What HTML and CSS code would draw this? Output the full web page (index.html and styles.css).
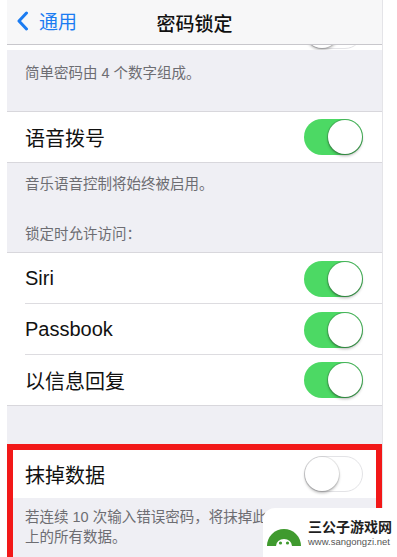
FILE: index.html
```html
<!DOCTYPE html>
<html lang="zh">
<head>
<meta charset="utf-8">
<link rel="stylesheet" href="styles.css">
</head>
<body>
<div class="screen">
  <div class="nav">
    <div class="back">
      <svg class="chev" width="13" height="20" viewBox="0 0 13 20"><path d="M10.5 2 L3 10 L10.5 18" fill="none" stroke="#1b7cf2" stroke-width="3" stroke-linecap="round" stroke-linejoin="round"/></svg>
      <span>通用</span>
    </div>
    <div class="title">密码锁定</div>
  </div>
  <div class="stub"><span class="switch off stub-switch"><span class="knob"></span></span></div>
  <div class="note note1">简单密码由 4 个数字组成。</div>
  <div class="group g1">
    <div class="row"><span class="label">语音拨号</span><span class="switch on"><span class="knob"></span></span></div>
  </div>
  <div class="note note2">音乐语音控制将始终被启用。</div>
  <div class="header">锁定时允许访问：</div>
  <div class="group">
    <div class="row sep"><span class="label">Siri</span><span class="switch on"><span class="knob"></span></span></div>
    <div class="row sep"><span class="label">Passbook</span><span class="switch on"><span class="knob"></span></span></div>
    <div class="row last"><span class="label">以信息回复</span><span class="switch on"><span class="knob"></span></span></div>
  </div>
  <div class="marked">
    <div class="group flat">
      <div class="row row-erase"><span class="label">抹掉数据</span><span class="switch off"><span class="knob"></span></span></div>
    </div>
    <div class="note note3"><span class="line">若连续 10 次输入错误密码，将抹掉此 iPhone</span><span class="line">上的所有数据。</span></div>
  </div>
</div>
<div class="watermark">
  <svg class="logo" width="36" height="26" viewBox="0 0 36 26">
    <path d="M1 24 A17 17 0 0 1 35 24 Z" fill="#3f9a2e"/>
    <path d="M10 24 A8 7 0 0 1 26 24 Z" fill="#fff"/>
    <circle cx="14.5" cy="21" r="1.6" fill="#3f9a2e"/>
    <circle cx="21.5" cy="21" r="1.6" fill="#3f9a2e"/>
  </svg>
  <div class="wm-text">
    <div class="wm-name">三公子游戏网</div>
    <div class="wm-url">www.sangongzi.net</div>
  </div>
</div>
</body>
</html>
```
FILE: styles.css
```css
* { box-sizing: border-box; }
html, body { margin: 0; padding: 0; }
body {
  background: #fff;
  width: 397px;
  height: 557px;
  overflow: hidden;
  font-family: "Liberation Sans", "Noto Sans CJK SC", sans-serif;
  color: #111;
}
.screen {
  margin-left: 7px;
  width: 376px;
  height: 557px;
  background: #efeff4;
  overflow: hidden;
  border-right: 1px solid #e4e4e8;
}
.nav {
  height: 45px;
  background: #f7f7f8;
  border-bottom: 1px solid #c8c7cc;
  display: flex;
  align-items: center;
  position: relative;
}
.back {
  display: flex;
  align-items: center;
  gap: 10px;
  padding-left: 9px;
  color: #1b7cf2;
  font-size: 19px;
  margin-top: -3px;
}
.title {
  position: absolute;
  left: 0; right: 0; top: 9px;
  text-align: center;
  font-size: 19px;
  font-weight: 500;
  color: #111;
  pointer-events: none;
}
.stub {
  height: 5px;
  background: #fff;
  overflow: hidden;
  display: flex;
  justify-content: flex-end;
  padding-right: 19px;
}
.stub-switch { margin-top: -32px; border-color: #f0f0f2; }
.note {
  font-size: 14.5px;
  line-height: 20px;
  color: #6d6d72;
  padding: 0 18px;
}
.note1 { padding-top: 13px; height: 61px; }
.note2 { padding-top: 11px; height: 31px; }
.header {
  font-size: 14.5px;
  line-height: 20px;
  color: #6d6d72;
  padding: 30px 18px 8px;
}
.group {
  background: #fff;
  border-top: 1px solid #d8d7dc;
  border-bottom: 1px solid #d8d7dc;
}
.group.flat { border: none; }
.row {
  height: 51px;
  display: flex;
  align-items: center;
  justify-content: space-between;
  padding: 0 19px 0 18px;
  position: relative;
}
.row.last { height: 50px; }
.g1 .row { height: 50px; }
.row.sep::after {
  content: "";
  position: absolute;
  left: 18px; right: 0; bottom: 0;
  height: 1px;
  background: #dddce0;
}
.label { font-size: 20px; color: #111; }
.switch {
  width: 59px;
  height: 36px;
  border-radius: 18px;
  position: relative;
  flex: none;
  display: block;
}
.switch.on { background: #4cd964; }
.switch.off { background: #fff; border: 1.5px solid #e3e3e6; }
.knob {
  position: absolute;
  top: 1px;
  width: 34px;
  height: 34px;
  border-radius: 50%;
  background: #fff;
  box-shadow: 0 2px 3px rgba(0,0,0,0.28), 0 0 0 1px rgba(0,0,0,0.08);
}
.switch.on .knob { right: 1px; box-shadow: 0 2px 3px rgba(0,0,0,0.3), 0 0 0 1px rgba(60,110,70,0.35); }
.switch.off .knob { left: -0.5px; top: -0.5px; }
.marked {
  margin-top: 38px;
  border: 6px solid #f21818;
  border-bottom: none;
  height: 120px;
}
.row-erase { height: 48px; padding-left: 12px; padding-right: 13px; }
.note3 { padding: 9px 12px 0; background: #efeff4; }
.line { display: block; white-space: nowrap; }
.watermark {
  position: absolute;
  left: 263px;
  top: 508px;
  width: 134px;
  height: 49px;
  background: #fff;
  border-top-left-radius: 12px;
  display: flex;
  align-items: center;
  gap: 6px;
  padding-left: 3px;
}
.logo { flex: none; margin-top: 4px; }
.wm-text { white-space: nowrap; }
.wm-name {
  font-family: "Noto Sans CJK SC", sans-serif;
  font-weight: 700;
  font-size: 14px;
  line-height: 19px;
  color: #1e1e1e;
  letter-spacing: 0;
}
.wm-url {
  font-family: "Liberation Sans", sans-serif;
  font-size: 9.5px;
  line-height: 12px;
  color: #555;
}
```
